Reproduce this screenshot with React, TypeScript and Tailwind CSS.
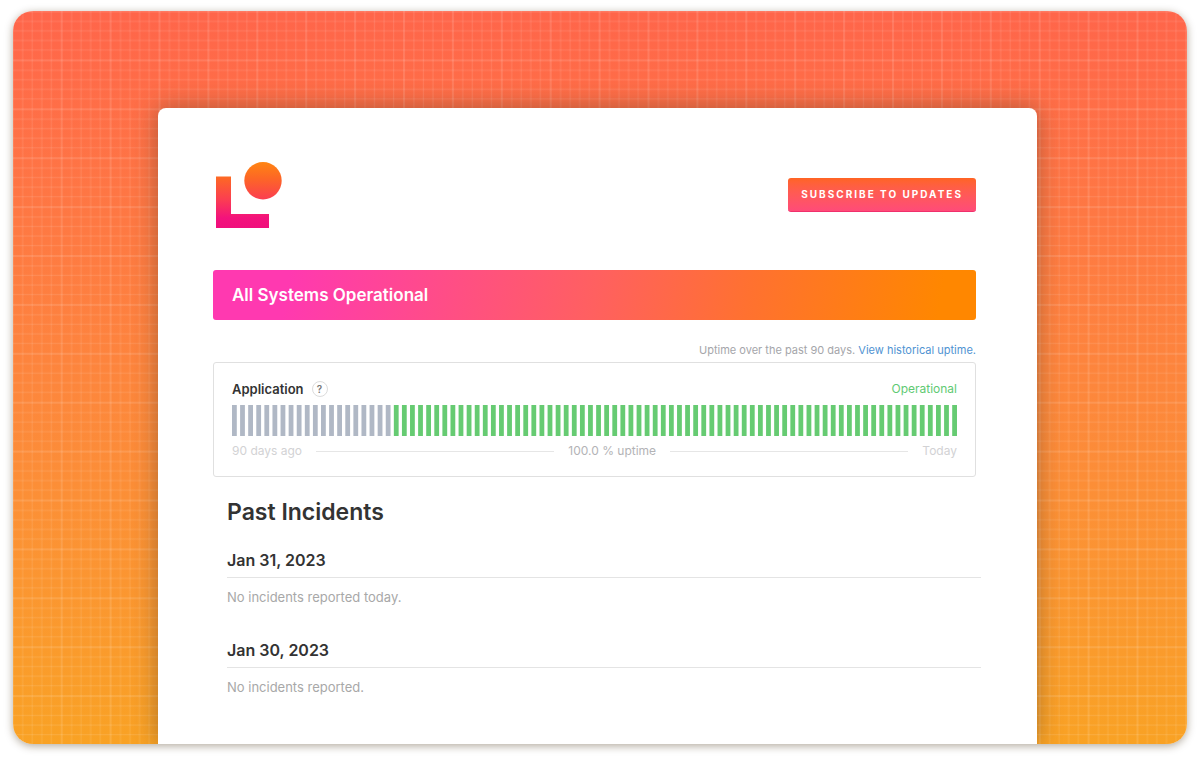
import React from "react";

const DAYS = 90;
const DAYS_WITHOUT_DATA = 20;

const incidents = [
  { date: "Jan 31, 2023", note: "No incidents reported today." },
  { date: "Jan 30, 2023", note: "No incidents reported." },
];

function GridBackdrop() {
  const minor = [10.9, 20.4, 30, 39.5];
  return (
    <svg className="absolute inset-0 h-full w-full" aria-hidden="true">
      <defs>
        <pattern id="grid" x="47.7" y="48.4" width="48.9" height="48.9" patternUnits="userSpaceOnUse">
          <g fill="#fff" fillOpacity="0.1">
            {minor.map((p) => (
              <React.Fragment key={p}>
                <rect x={p - 0.6} y="0" width="1.2" height="48.9" />
                <rect x="0" y={p - 0.6} width="48.9" height="1.2" />
              </React.Fragment>
            ))}
          </g>
          <g fill="#fff" fillOpacity="0.12">
            <rect x="0" y="0" width="2" height="48.9" />
            <rect x="0" y="0" width="48.9" height="2" />
          </g>
        </pattern>
      </defs>
      <rect width="100%" height="100%" fill="url(#grid)" />
    </svg>
  );
}

function Logo() {
  return (
    <svg className="h-[66px] w-[66px]" viewBox="0 0 66 66" role="img" aria-label="Logo">
      <defs>
        <linearGradient id="mark" gradientUnits="userSpaceOnUse" x1="0" y1="0" x2="0" y2="66">
          <stop offset="0" stopColor="#ff8512" />
          <stop offset="0.25" stopColor="#fd6626" />
          <stop offset="0.56" stopColor="#fb3f50" />
          <stop offset="0.85" stopColor="#f3127c" />
          <stop offset="1" stopColor="#f00f7c" />
        </linearGradient>
      </defs>
      <path d="M0 14.5h15v37.5h38v14H0z" fill="url(#mark)" />
      <circle cx="47" cy="18.7" r="18.7" fill="url(#mark)" />
    </svg>
  );
}

function UptimeCard() {
  return (
    <section className="rounded-[3px] border border-[#e0e0e0] px-[18px] pt-4 pb-[15px]">
      <div className="flex items-center justify-between">
        <div className="flex items-center gap-2">
          <h2 className="text-[13px] leading-5 font-semibold text-[#333]">Application</h2>
          <button
            type="button"
            aria-label="About this component"
            className="flex h-4 w-4 items-center justify-center rounded-full border border-[#dcdcdc] text-[10px] font-semibold text-[#777]"
          >
            ?
          </button>
        </div>
        <span className="text-[12px] leading-5 text-[#5fca73]">Operational</span>
      </div>
      <svg
        className="mt-[6px] h-[31px] w-full"
        viewBox="0 0 725 31"
        preserveAspectRatio="none"
        role="img"
        aria-label="Uptime for each of the past 90 days"
      >
        {Array.from({ length: DAYS }, (_, day) => (
          <rect
            key={day}
            x={day * 8.092}
            y="0"
            width="4.8"
            height="31"
            fill={day < DAYS_WITHOUT_DATA ? "#b0b8c5" : "#66cb72"}
          />
        ))}
      </svg>
      <div className="mt-[5px] flex items-center gap-[14px] text-[12px] leading-5 text-[#d2d2d4]">
        <span>90 days ago</span>
        <span className="h-px flex-1 bg-[#e6e6e6]" />
        <span className="text-[#b3b3b6]">100.0 % uptime</span>
        <span className="h-px flex-1 bg-[#e6e6e6]" />
        <span>Today</span>
      </div>
    </section>
  );
}

export default function App() {
  return (
    <div className="bg-white px-[13px] pt-[11px] pb-[15px] font-['Inter','Liberation_Sans',sans-serif]">
      <div className="relative overflow-hidden rounded-[20px] bg-linear-to-b from-[#ff654a] to-[#f9a224] shadow-[0_2px_9px_rgba(60,40,10,0.4)]">
        <GridBackdrop />
        <main className="relative mt-[97px] mr-[150px] ml-[145px] rounded-t-[8px] bg-white pt-[54px] pr-[61px] pb-[47px] pl-[55px] shadow-[0_0_24px_rgba(80,60,40,0.45)]">
          <header className="flex items-center justify-between pl-[3px]">
            <Logo />
            <button
              type="button"
              className="rounded-[3px] border-b border-[#f0306c] bg-linear-to-b from-[#ff6422] to-[#ff4b78] px-[13px] text-[10px] leading-[33px] font-bold tracking-[2px] text-white"
            >
              SUBSCRIBE TO UPDATES
            </button>
          </header>

          <div className="mt-[42px] rounded-[3px] bg-[linear-gradient(100deg,#ff39b0_10%,#ff6060_50%,#ff7130_70%,#ff8700_95%)] px-[19px]">
            <h1 className="text-[17px] leading-[50px] font-semibold text-white">All Systems Operational</h1>
          </div>

          <p className="mt-[20px] mb-[2px] text-right text-[11px] leading-5 text-[#a5a6aa]">
            Uptime over the past 90 days.{" "}
            <a href="#history" className="text-[#4f93d2]">
              View historical uptime.
            </a>
          </p>
          <UptimeCard />

          <section id="history" className="-mr-[5px] ml-[14px] pt-[18px] text-[#333]">
            <h2 className="text-[23px] leading-[34px] font-semibold">Past Incidents</h2>
            <div className="mt-[17px] flex flex-col gap-[29px]">
              {incidents.map((incident) => (
                <article key={incident.date}>
                  <h3 className="border-b border-[#e4e4e4] pb-[2px] text-[16px] leading-[29px] font-semibold">
                    {incident.date}
                  </h3>
                  <p className="pt-[9px] text-[13px] leading-5 text-[#a8a8a8]">{incident.note}</p>
                </article>
              ))}
            </div>
          </section>
        </main>
      </div>
    </div>
  );
}
